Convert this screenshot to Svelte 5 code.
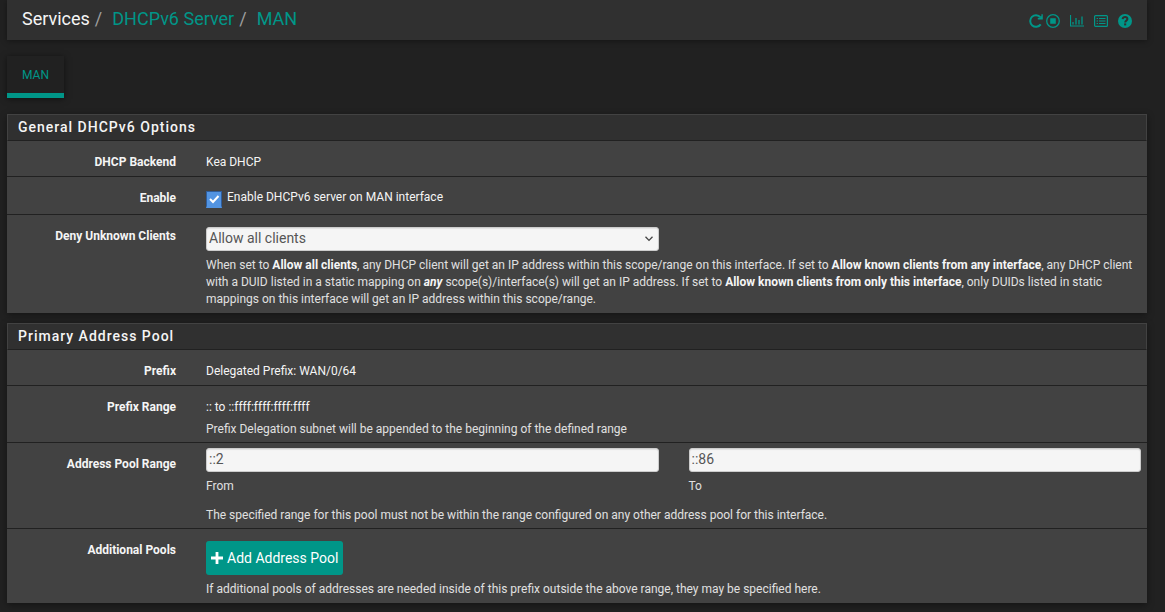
<script>
  let enabled = $state(true);
  let clients = $state('Allow all clients');
  let from = $state('::2');
  let to = $state('::86');
  const choices = [
    'Allow all clients',
    'Allow known clients from any interface',
    'Allow known clients from only this interface',
  ];
</script>

<div class="page">
  <header>
    <ol class="crumbs">
      <li>Services</li>
      <li><a href="#server">DHCPv6 Server</a></li>
      <li><a href="#man">MAN</a></li>
    </ol>
    <nav class="tools" aria-label="Service actions">
      <a href="#restart" aria-label="Restart service" class="tight">
        <svg width="14" height="14" viewBox="0 0 14 14">
          <path d="M11.700 10.400A5.800 5.800 0 1 1 11.400 3.200" fill="none" stroke="currentColor" stroke-width="2" />
          <path d="M13.800 0.200v5.200H8.800V4L11 3.600 12.400 2V0.200z" fill="currentColor" />
        </svg>
      </a>
      <a href="#stop" aria-label="Stop service">
        <svg width="14" height="14" viewBox="0 0 14 14">
          <circle cx="7" cy="7" r="6.300" fill="none" stroke="currentColor" stroke-width="1.300" />
          <rect x="4.200" y="4.200" width="5.600" height="5.600" rx="0.500" fill="currentColor" />
        </svg>
      </a>
      <a href="#status" aria-label="Status graph">
        <svg width="14" height="14" viewBox="0 0 14 14">
          <path d="M0.500 1v11h13.500" fill="none" stroke="currentColor" stroke-width="1.200" />
          <path d="M3 10.500V8M6 10.500V4M9 10.500V6M12 10.500V2.500" stroke="currentColor" stroke-width="1.300" />
        </svg>
      </a>
      <a href="#log" aria-label="Log entries">
        <svg width="14" height="14" viewBox="0 0 14 14">
          <rect x="0.600" y="1.600" width="12.800" height="10.800" rx="1" fill="none" stroke="currentColor" stroke-width="1.200" />
          <path d="M2.600 4.500h1.400M2.600 7h1.400M2.600 9.500h1.400M5 4.500h6.500M5 7h6.500M5 9.500h6.500" stroke="currentColor" stroke-width="1" />
        </svg>
      </a>
      <a href="#help" aria-label="Help">
        <svg width="14" height="14" viewBox="0 0 14 14">
          <circle cx="7" cy="7" r="7" fill="currentColor" />
          <path d="M4.600 5.200C4.800 3.600 5.800 3 7.100 3c1.400 0 2.300.8 2.300 2 0 1.600-2.200 1.600-2.200 3.400" fill="none" stroke="#303030" stroke-width="2" />
          <rect x="6.100" y="9.400" width="2.100" height="2" fill="#303030" />
        </svg>
      </a>
    </nav>
  </header>

  <nav class="tabs" aria-label="Interfaces"><a href="#man">MAN</a></nav>

  <section>
    <h2>General DHCPv6 Options</h2>
    <div class="row">
      <span class="name">DHCP Backend</span>
      <div class="value">Kea DHCP</div>
    </div>
    <div class="row">
      <span class="name">Enable</span>
      <label class="value check">
        <input type="checkbox" bind:checked={enabled} />
        <span>Enable DHCPv6 server on MAN interface</span>
      </label>
    </div>
    <div class="row">
      <label class="name" for="deny">Deny Unknown Clients</label>
      <div class="field">
        <div class="pair">
          <div class="select">
            <select id="deny" bind:value={clients}>
              {#each choices as choice}
                <option>{choice}</option>
              {/each}
            </select>
            <svg width="8" height="6" viewBox="0 0 8 6"><path d="M0.500 0.700l3.500 3.700 3.500-3.700" fill="none" stroke="#444" stroke-width="1.300" /></svg>
          </div>
        </div>
        <p class="help">
          When set to <b>Allow all clients</b>, any DHCP client will get an IP address within this scope/range on this interface. If set to <b>Allow known clients from any interface</b>, any DHCP client with a DUID listed in a static mapping on <b><i>any</i></b> scope(s)/interface(s) will get an IP address. If set to <b>Allow known clients from only this interface</b>, only DUIDs listed in static mappings on this interface will get an IP address within this scope/range.
        </p>
      </div>
    </div>
  </section>

  <section>
    <h2>Primary Address Pool</h2>
    <div class="row">
      <span class="name">Prefix</span>
      <div class="value">Delegated Prefix: WAN/0/64</div>
    </div>
    <div class="row">
      <span class="name">Prefix Range</span>
      <div class="value lines">
        <span>:: to ::ffff:ffff:ffff:ffff</span>
        <span class="hint">Prefix Delegation subnet will be appended to the beginning of the defined range</span>
      </div>
    </div>
    <div class="row">
      <span class="name">Address Pool Range</span>
      <div class="range">
        <div class="pair">
          <div>
            <input class="text" id="from" type="text" bind:value={from} />
            <label class="help" for="from">From</label>
          </div>
          <div>
            <input class="text" id="to" type="text" bind:value={to} />
            <label class="help" for="to">To</label>
          </div>
        </div>
        <p class="note">The specified range for this pool must not be within the range configured on any other address pool for this interface.</p>
      </div>
    </div>
    <div class="row">
      <span class="name">Additional Pools</span>
      <div class="field">
        <button type="button">
          <svg width="12" height="12" viewBox="0 0 12 12"><path d="M6 0v12M0 6h12" stroke="currentColor" stroke-width="2.800" /></svg>
          Add Address Pool
        </button>
        <p class="help">If additional pools of addresses are needed inside of this prefix outside the above range, they may be specified here.</p>
      </div>
    </div>
  </section>
</div>

<style>
  :global(body) {
    background: #212121;
    color: #f5f5f5;
    font: 12px/17px Roboto, sans-serif;
  }
  .page {
    padding: 0 18px 0 7px;
  }
  a {
    color: #009688;
    text-decoration: none;
  }
  header {
    display: flex;
    justify-content: space-between;
    align-items: center;
    box-sizing: border-box;
    height: 40px;
    padding: 0 15px;
    background: #303030;
    box-shadow: 0 1px 6px rgba(0, 0, 0, 0.4);
  }
  .crumbs {
    display: flex;
    margin: 0;
    padding: 0 0 2px;
    list-style: none;
    font-size: 18px;
    line-height: 24px;
  }
  .crumbs li + li::before {
    content: '/';
    padding: 0 10px 0 5px;
    color: #9e9e9e;
  }
  .tools {
    display: flex;
    gap: 10px;
    padding-top: 2px;
  }
  .tools .tight {
    margin-right: -7px;
  }
  svg {
    display: block;
    flex: none;
  }
  .tabs {
    display: flex;
    margin: 16px 0;
  }
  .tabs a {
    padding: 11px 15px 9px;
    border-bottom: 5px solid #009688;
    box-shadow: 0 1px 6px rgba(0, 0, 0, 0.5);
  }
  section {
    margin-bottom: 10px;
    background: #424242;
    box-shadow: 0 2px 7px rgba(0, 0, 0, 0.4);
  }
  h2 {
    margin: 0;
    padding: 3px 10px 4px;
    border: 1px solid #424242;
    border-bottom-color: #212121;
    background: #303030;
    font-size: 14px;
    font-weight: 500;
    line-height: 18px;
    letter-spacing: 1px;
  }
  .row {
    display: grid;
    grid-template-columns: 169px minmax(0, 1fr);
    column-gap: 30px;
    padding-right: 6px;
  }
  .row + .row {
    border-top: 1px solid #212121;
  }
  .name {
    padding-top: 13px;
    font-weight: 700;
    text-align: right;
  }
  .value {
    padding: 13px 0 5px;
  }
  .check {
    display: flex;
    gap: 5px;
    padding: 12px 0 6px;
  }
  .check input {
    appearance: none;
    box-sizing: border-box;
    width: 16px;
    height: 17px;
    margin: 2px 0 0;
    border: 1px solid #2f5d9b;
    border-bottom: 2px solid #5294e2;
    background: #5294e2;
  }
  .check input:checked {
    background: #5294e2 url("data:image/svg+xml,%3Csvg xmlns='http://www.w3.org/2000/svg' viewBox='0 0 14 14'%3E%3Cpath d='M3 7l3 3 5.500-6' fill='none' stroke='white' stroke-width='2'/%3E%3C/svg%3E") center / 14px no-repeat;
  }
  .lines {
    display: grid;
    gap: 5px;
    padding-bottom: 4px;
  }
  .field {
    padding: 12px 0 5px;
  }
  .range {
    padding: 5px 0 4px;
  }
  .pair {
    display: grid;
    grid-template-columns: 1fr 1fr;
    gap: 30px;
  }
  .select {
    display: grid;
    align-items: center;
  }
  .select > * {
    grid-area: 1 / 1;
  }
  .select svg {
    justify-self: end;
    margin-right: 6px;
    pointer-events: none;
  }
  select,
  .text {
    appearance: none;
    box-sizing: border-box;
    width: 100%;
    height: 24px;
    margin: 0;
    padding: 0 2px 2px;
    border: 1px solid #ccc;
    border-radius: 3px;
    background: #f5f5f5;
    box-shadow: inset 0 1px 1px rgba(0, 0, 0, 0.08);
    color: #555;
    font: 14px/20px Roboto, sans-serif;
  }
  .help {
    display: block;
    margin: 6px 0 0;
  }
  .help,
  .hint,
  .note {
    color: #e0e0e0;
  }
  b {
    color: #f5f5f5;
  }
  .note {
    margin: 12px 0 0;
  }
  button {
    display: flex;
    align-items: center;
    gap: 4px;
    height: 34px;
    padding: 0 5px;
    border: 0;
    border-radius: 3px;
    background: #009688;
    color: #fff;
    font: 14px/20px Roboto, sans-serif;
  }
</style>
